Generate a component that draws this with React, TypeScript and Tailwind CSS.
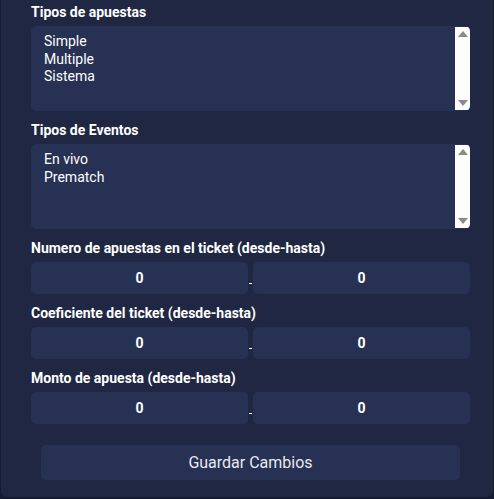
import React from 'react'

const font = { fontFamily: 'Roboto, "Liberation Sans", sans-serif' }

function ListBox({ items }: { items: string[] }) {
  return (
    <div className="flex h-[85px] overflow-hidden rounded-[5px] bg-[#263154]">
      <div className="flex-1 pl-[13px] pt-[7px] text-[14px] leading-[17.5px] text-white">
        {items.map((item) => (
          <div key={item}>{item}</div>
        ))}
      </div>
      {/* fake native scrollbar */}
      <div className="my-px flex w-[15px] flex-col items-center justify-between bg-[#fdfdfd] py-[4px]">
        <div className="h-0 w-0 border-x-[5px] border-b-[6px] border-x-transparent border-b-[#8a8a8a]" />
        <div className="h-0 w-0 border-x-[5px] border-t-[6px] border-x-transparent border-t-[#8a8a8a]" />
      </div>
    </div>
  )
}

function RangeInputs() {
  return (
    <div className="flex items-end">
      <div className="flex h-[32px] flex-1 items-center justify-center rounded-[5px] bg-[#263154] text-[14px] font-bold text-white">
        0
      </div>
      <div className="mx-px mb-[10px] h-px w-[3px] bg-white" />
      <div className="flex h-[32px] flex-1 items-center justify-center rounded-[5px] bg-[#263154] text-[14px] font-bold text-white">
        0
      </div>
    </div>
  )
}

function Label({ children }: { children: React.ReactNode }) {
  return <div className="mb-[4px] text-[14px] font-bold leading-[20px] text-white">{children}</div>
}

export default function App() {
  return (
    <div className="h-[499px] w-[494px] bg-[#151b30]" style={font}>
      <div className="ml-px mr-px h-[497px] rounded-b-md bg-[#1f2742] pl-[30px] pr-[23px] pt-[2px]">
        <Label>Tipos de apuestas</Label>
        <ListBox items={['Simple', 'Multiple', 'Sistema']} />

        <div className="mt-[9px]">
          <Label>Tipos de Eventos</Label>
          <ListBox items={['En vivo', 'Prematch']} />
        </div>

        <div className="mt-[9px]">
          <Label>Numero de apuestas en el ticket (desde-hasta)</Label>
          <RangeInputs />
        </div>

        <div className="mt-[9px]">
          <Label>Coeficiente del ticket (desde-hasta)</Label>
          <RangeInputs />
        </div>

        <div className="mt-[9px]">
          <Label>Monto de apuesta (desde-hasta)</Label>
          <RangeInputs />
        </div>

        <div className="mt-[21px] px-[10px]">
          <button className="flex h-[35px] w-full items-center justify-center rounded-[5px] bg-[#263154] text-[16px] text-[#e8eaf0]">
            Guardar Cambios
          </button>
        </div>
      </div>
    </div>
  )
}
